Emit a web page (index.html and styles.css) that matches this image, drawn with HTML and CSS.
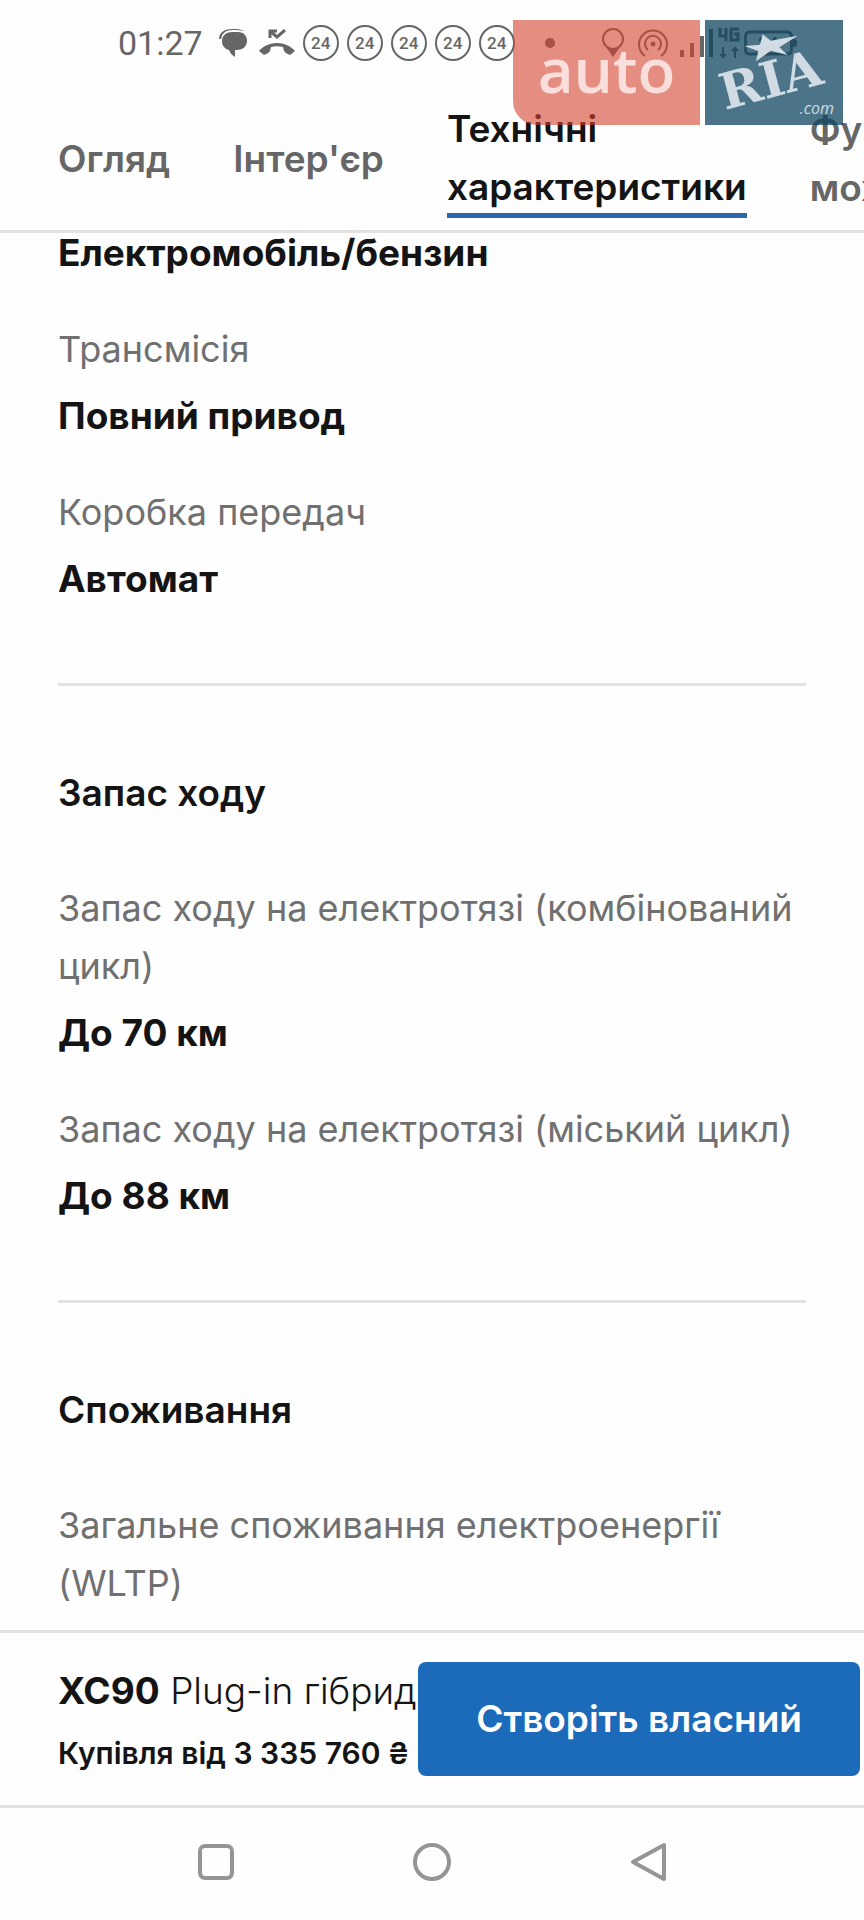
FILE: index.html
```
<!DOCTYPE html>
<html lang="uk">
<head>
    <meta charset="UTF-8">
    <meta name="viewport" content="width=device-width, initial-scale=1.0">
    <title>XC90 Plug-in гібрид</title>
    <link rel="stylesheet" href="styles.css">
</head>
<body>
    <header class="header">
        <div class="status-bar">
            <div class="status-left">
                <span class="time">01:27</span>
                <svg class="icon-chat" width="28" height="28" viewBox="0 0 28 28">
                    <path d="M0 9C1 3 6 0 13 0h4c4 0 6 1 8 2-4-1-7-1-11-1C7 1 3 4 2 10 1 10 0 10 0 9z"/>
                    <path d="M13 3h6c6 0 9 4 9 9s-4 9-10 9h-2v7c-3-2-5-4-6-7-4-1-7-4-7-9 0-6 5-9 10-9z"/>
                </svg>
                <svg class="icon-call" width="36" height="28" viewBox="0 0 36 28">
                    <path d="M18 14c7 0 14 3 18 8l-5 4c-2-1-5-2-6-4l-1-4c-4-1-8-1-12 0l-1 4c-1 2-4 3-6 4l-5-4c4-5 11-8 18-8z"/>
                    <path class="line" d="M11 9V2h7M11 2l7 6 8-7"/>
                </svg>
                <span class="badge">24</span>
                <span class="badge">24</span>
                <span class="badge">24</span>
                <span class="badge">24</span>
                <span class="badge">24</span>
            </div>
            <div class="status-right">
                <span class="dot"></span>
                <svg class="icon-pin" width="22" height="30" viewBox="0 0 22 30">
                    <circle class="line thin" cx="11" cy="11" r="10"/>
                    <path d="M4 19c4 3 10 3 14 0l-7 10z"/>
                </svg>
                <svg class="icon-cast" width="32" height="30" viewBox="0 0 32 30">
                    <circle cx="16" cy="16" r="2.5"/>
                    <path class="line thin" d="M11 22a8 8 0 1 1 10 0M8 28a14 14 0 1 1 16 0"/>
                </svg>
                <svg class="icon-signal" width="34" height="30" viewBox="0 0 34 30">
                    <path d="M0 22h4v7H0zM10 15h4v14h-4zM20 8h4v21h-4zM29 1h4v28h-4z"/>
                </svg>
                <svg class="icon-net" width="22" height="32" viewBox="0 0 22 32">
                    <path class="line" d="M2 1v8h7M8 1v13M21 2h-8v11h7V7h-4"/>
                    <path class="line thin" d="M5 20v10M2 27l3 3 3-3M17 31V21M14 24l3-3 3 3"/>
                </svg>
                <svg class="icon-battery" width="54" height="26" viewBox="0 0 54 26">
                    <rect class="line" x="1.5" y="2" width="46" height="22" rx="4"/>
                    <path d="M49 9h2q2 0 2 4t-2 4h-2z"/>
                    <text x="24" y="20" text-anchor="middle">24</text>
                </svg>
            </div>
        </div>
        <nav class="tabs">
            <a class="tab" href="#overview">Огляд</a>
            <a class="tab" href="#interior">Інтер'єр</a>
            <a class="tab active" href="#specs">Технічні<br>характеристики</a>
            <a class="tab" href="#features">Функціональні<br>можливості</a>
        </nav>
    </header>

    <main class="specs" id="specs">
        <section class="group">
            <dl class="list">
                <dd>Електромобіль/бензин</dd>
                <dt>Трансмісія</dt>
                <dd>Повний привод</dd>
                <dt>Коробка передач</dt>
                <dd>Автомат</dd>
            </dl>
        </section>
        <section class="group">
            <h2>Запас ходу</h2>
            <dl class="list">
                <dt>Запас ходу на електротязі (комбінований цикл)</dt>
                <dd>До 70 км</dd>
                <dt>Запас ходу на електротязі (міський цикл)</dt>
                <dd>До 88 км</dd>
            </dl>
        </section>
        <section class="group">
            <h2>Споживання</h2>
            <dl class="list">
                <dt>Загальне споживання електроенергії (WLTP)</dt>
            </dl>
        </section>
    </main>

    <footer class="offer">
        <div class="offer-text">
            <p class="model"><strong>XC90</strong> Plug-in гібрид</p>
            <p class="price">Купівля від 3 335 760 ₴</p>
        </div>
        <button class="btn" type="button">Створіть власний</button>
    </footer>

    <div class="system-nav">
        <button type="button" aria-label="Останні програми">
            <svg width="40" height="40" viewBox="0 0 40 40"><rect x="4" y="4" width="32" height="32" rx="5"/></svg>
        </button>
        <button type="button" aria-label="Головний екран">
            <svg width="40" height="40" viewBox="0 0 40 40"><circle cx="20" cy="20" r="17"/></svg>
        </button>
        <button type="button" aria-label="Назад">
            <svg width="40" height="40" viewBox="0 0 40 40"><path d="M36 3v34L5 20z"/></svg>
        </button>
    </div>

    <div class="watermark">
        <div class="mark-auto">auto</div>
        <svg class="mark-ria" width="138" height="105" viewBox="0 0 138 105">
            <text class="ria" transform="translate(20 90) rotate(-15)">RIA</text>
            <path d="M57.7 14.3l8 6.4 27-5-18.4 11.6 8.4 7.7-17-4.3L51 41.3 53.3 31l-14-5 15.7-1.3z"/>
            <text class="com" x="129" y="94" text-anchor="end">.com</text>
        </svg>
    </div>
</body>
</html>
```
FILE: styles.css
```
* {
    box-sizing: border-box;
}
body {
    display: flex;
    flex-direction: column;
    height: 100vh;
    margin: 0;
    overflow: hidden;
    background: #fefefe;
    color: #141414;
    font-family: Inter, "Open Sans", sans-serif;
    font-size: 36px;
    line-height: 58px;
}
h2, p, dl, dd {
    margin: 0;
}

/* header */
.header {
    position: relative;
    z-index: 1;
    background: #fefefe;
    border-bottom: 3px solid #e2e2e2;
}
.status-bar {
    display: flex;
    justify-content: space-between;
    height: 86px;
    padding: 0 66px 0 118px;
    color: #666;
    fill: #666;
}
.status-left, .status-right {
    display: flex;
    align-items: center;
    gap: 8px;
}
.status-right {
    gap: 4px;
}
.time {
    margin-right: 8px;
    font-family: Roboto, sans-serif;
    font-size: 34px;
}
.icon-call {
    margin-left: 4px;
}
.line {
    fill: none;
    stroke: #666;
    stroke-width: 3;
}
.thin {
    stroke-width: 2;
}
.badge {
    width: 36px;
    height: 36px;
    border: 2px solid #666;
    border-radius: 50%;
    font: 500 17px/32px Roboto, sans-serif;
    text-align: center;
}
.dot {
    width: 10px;
    height: 10px;
    margin-right: 43px;
    border-radius: 50%;
    background: #666;
}
.icon-cast {
    margin: 0 7px 0 9px;
}
.icon-battery {
    font: 700 18px Roboto, sans-serif;
}
.tabs {
    display: flex;
    align-items: center;
    gap: 63px;
    margin: 14px 0 12px;
    padding-left: 58px;
    overflow: hidden;
}
.tab {
    flex: none;
    color: #666;
    font-size: 37px;
    font-weight: 600;
    text-decoration: none;
}
.active {
    padding-bottom: 2px;
    color: #141414;
    box-shadow: inset 0 -5px #2b66a8;
}

/* specifications */
.specs {
    flex: 1;
    min-height: 0;
    margin-top: -9px;
    padding: 0 58px;
    overflow: hidden;
}
.group {
    padding-bottom: 75px;
}
.group + .group {
    padding-top: 78px;
    border-top: 3px solid #e2e2e2;
}
h2 {
    margin-bottom: 57px;
    font-size: 37px;
    font-weight: 600;
}
dt {
    color: #707070;
    font-weight: 400;
}
dd {
    font-size: 37px;
    font-weight: 700;
}
dt + dd {
    margin-top: 9px;
}
dd + dt {
    margin-top: 38px;
}

/* offer */
.offer {
    display: flex;
    align-items: flex-start;
    justify-content: space-between;
    padding: 29px 4px 23px 58px;
    border-top: 3px solid #e2e2e2;
    border-bottom: 3px solid #e2e2e2;
    background: #fefefe;
    white-space: nowrap;
}
.model {
    font-size: 37px;
    font-weight: 300;
}
.model strong {
    font-weight: 700;
}
.price {
    padding-top: 4px;
    font-size: 30px;
    font-weight: 600;
}
.btn {
    padding: 28px 58px;
    border: none;
    border-radius: 8px;
    background: #1c6bba;
    color: white;
    font: inherit;
    font-size: 37px;
    font-weight: 600;
    cursor: pointer;
}

/* phone buttons */
.system-nav {
    display: flex;
    justify-content: space-around;
    padding: 34px 108px 38px;
}
.system-nav button {
    display: flex;
    padding: 0;
    border: none;
    background: none;
}
.system-nav svg {
    fill: none;
    stroke: #959595;
    stroke-width: 4;
    stroke-linejoin: round;
}

/* watermark lies over the page */
.watermark {
    position: absolute;
    z-index: 2;
    top: 20px;
    right: 21px;
    display: flex;
    gap: 5px;
}
.mark-auto {
    width: 187px;
    height: 105px;
    border-bottom-left-radius: 24px;
    background: rgba(212, 65, 45, 0.6);
    color: #fadedb;
    font: 600 62px/98px "Open Sans", sans-serif;
    text-align: center;
}
.mark-ria {
    background: rgba(15, 70, 96, 0.75);
    fill: #d0dbe4;
}
.ria {
    font: 700 50px "DejaVu Serif", serif;
}
.com {
    font: italic 16px "Open Sans", sans-serif;
}
```
